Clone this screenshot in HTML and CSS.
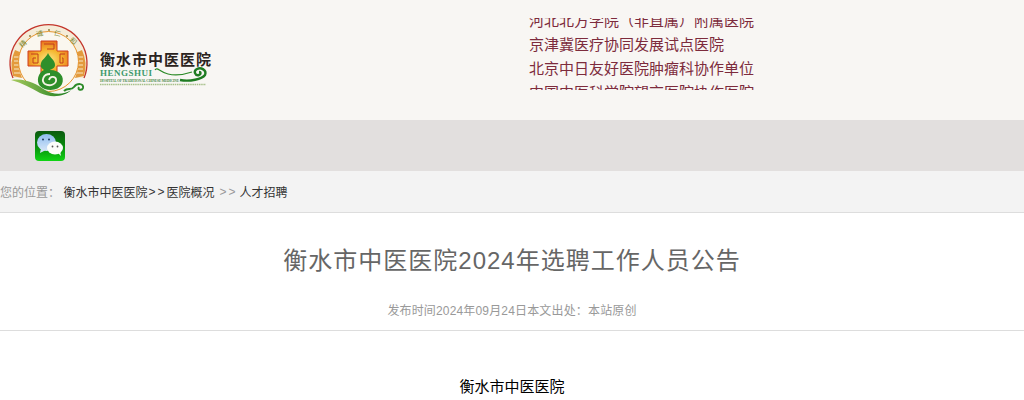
FILE: index.html
```html
<!DOCTYPE html>
<html lang="zh-CN">
<head>
  <meta charset="UTF-8" />
  <title>衡水市中医医院2024年选聘工作人员公告</title>
  <link rel="stylesheet" href="styles.css">
</head>
<body>
  <div class="header">
    <svg class="logo" width="215" height="80" viewBox="8 20 215 80" role="img" aria-label="衡水市中医医院">
      <defs>
        <radialGradient id="gold" cx="0.5" cy="0.6" r="0.6">
          <stop offset="0" stop-color="#fbe98a"/>
          <stop offset="0.55" stop-color="#f5b52e"/>
          <stop offset="1" stop-color="#e8741f"/>
        </radialGradient>
        <linearGradient id="leaf" x1="0" y1="0" x2="1" y2="0">
          <stop offset="0" stop-color="#a9cb5e"/>
          <stop offset="1" stop-color="#167a1c"/>
        </linearGradient>
      </defs>
      <!-- ring -->
      <path d="M13 78A38.500 38.500 0 1 1 84 78" fill="#f5ecd8" stroke="#c4362c" stroke-width="1.300"/>
      <path d="M13 76A37 37 0 0 1 15 50L22 53A30 30 0 0 0 22 78Z" fill="#e39a3c"/>
      <path d="M84 76A37 37 0 0 0 82 50L75 53A30 30 0 0 1 75 78Z" fill="#e39a3c"/>
      <path d="M14 57H21M14 61H20M14 65H20M14 69H21M14 73H21M76 57H83M77 61H83M77 65H83M77 69H83M76 73H83" stroke="#f8e9c8" stroke-width="1"/>
      <circle cx="48.500" cy="61.500" r="30" fill="#faf7ef" stroke="#e6952e" stroke-width="1"/>
      <text class="logo-ring" x="19" y="46" transform="rotate(-42 23 43)">精</text>
      <text class="logo-ring" x="36" y="36" transform="rotate(-14 40 33)">诚</text>
      <text class="logo-ring" x="54" y="36" transform="rotate(12 58 33)">仁</text>
      <text class="logo-ring" x="70" y="44" transform="rotate(40 74 41)">和</text>
      <circle cx="30" cy="36" r=".9" fill="#8a7a35"/>
      <circle cx="49" cy="30" r=".9" fill="#8a7a35"/>
      <circle cx="67" cy="36" r=".9" fill="#8a7a35"/>
      <!-- cross -->
      <path d="M41 41H57V51H68V66H57V73H41V66H28V51H41Z" fill="url(#gold)" stroke="#cf3f1e" stroke-width="1"/>
      <path d="M44 44H54V49H47M31 54H38V63H33V58H36M65 54H60V63H63V58H62" fill="none" stroke="#c23c1c" stroke-width="1"/>
      <!-- gourd and waves -->
      <path d="M48 53C50 58 55 60 55 65C55 68 52 69 50 70C60 70 65 77 62 84C59 91 46 92 40 86C36 81 38 73 44 70C41 68 40 66 41 63C42 59 46 58 48 53Z" fill="#2f8f2a"/>
      <path d="M50 74C43 74 41 81 45 84C50 87 57 84 56 79C55 76 50 76 49 80" fill="none" stroke="#f6f3e4" stroke-width="1.800"/>
      <path d="M11 80C26 78 36 84 45 90C53 95 64 95 71 90C65 97 50 98 40 93C31 88 22 83 11 80Z" fill="url(#leaf)"/>
      <path d="M64 91C68 87 71 91 74 87C77 83 84 83 83 88C82 91 77 90 79 87" fill="none" stroke="#2c8a28" stroke-width="2"/>
      <!-- name block -->
      <text class="logo-name" x="100" y="65">衡水市中医医院</text>
      <text class="logo-en" x="100" y="76" textLength="52">HENGSHUI</text>
      <text class="logo-sub" x="100" y="81.500" textLength="79">HOSPITAL OF TRADITIONAL CHINESE MEDICINE</text>
      <path d="M100 84.500H206" stroke="#a6c089" stroke-width="1.400" stroke-dasharray="1.500 .7"/>
      <path d="M155 70C157 66 161 73 168 74C176 76 186 74 192 72" fill="none" stroke="#2c8a28" stroke-width="1.200"/>
      <path d="M180 80C190 82 202 79 205 75C207 70 201 67 197 69C193 71 195 76 199 75C201 74 201 72 199 72" fill="none" stroke="#1f7c22" stroke-width="2.400"/>
    </svg>
    <div class="notice-box">
      <ul class="notice-list">
        <li>河北北方学院（非直属）附属医院</li>
        <li>京津冀医疗协同发展试点医院</li>
        <li>北京中日友好医院肿瘤科协作单位</li>
        <li>中国中医科学院望京医院协作医院</li>
      </ul>
    </div>
  </div>

  <div class="share-bar">
    <svg class="wechat" width="30" height="30" viewBox="0 0 30 30" role="img" aria-label="微信">
      <defs>
        <linearGradient id="wx" x1="0" y1="0" x2="0" y2="1">
          <stop offset="0" stop-color="#0b5a10"/>
          <stop offset="0.5" stop-color="#078a0c"/>
          <stop offset="1" stop-color="#10d414"/>
        </linearGradient>
        <linearGradient id="bubble" x1="0" y1="0" x2="0" y2="1">
          <stop offset="0" stop-color="#8fbdf0"/>
          <stop offset="1" stop-color="#d6e6f8"/>
        </linearGradient>
      </defs>
      <rect width="30" height="30" rx="4" fill="url(#wx)"/>
      <ellipse cx="11.500" cy="11.500" rx="9.500" ry="8.500" fill="url(#bubble)"/>
      <path d="M6 17L5 22L11 19Z" fill="#d0e2f6"/>
      <circle cx="8" cy="8.500" r="1" fill="#1f3f66"/>
      <circle cx="14" cy="8.500" r="1" fill="#1f3f66"/>
      <ellipse cx="20" cy="17" rx="8" ry="6.500" fill="#fbfdfb"/>
      <path d="M23 22L26 25L25 20Z" fill="#fbfdfb"/>
      <circle cx="17.500" cy="15.500" r=".9" fill="#555"/>
      <circle cx="22.500" cy="15.500" r=".9" fill="#555"/>
    </svg>
  </div>

  <div class="crumbs">
    <span class="crumbs-label">您的位置：</span>
    <a class="crumbs-link">衡水市中医医院</a>
    <span class="crumbs-arrows">&gt;&gt;</span>
    <a class="crumbs-link">医院概况</a>
    <span class="crumbs-sep">&gt;&gt;</span>
    <a class="crumbs-link">人才招聘</a>
  </div>

  <div class="article-head">
    <h1 class="article-title">衡水市中医医院2024年选聘工作人员公告</h1>
    <p class="article-meta">发布时间2024年09月24日本文出处：本站原创</p>
  </div>

  <div class="article-body">
    <p>衡水市中医医院</p>
  </div>
</body>
</html>
```

FILE: styles.css
```css
body {
  margin: 0;
  height: 400px;
  overflow: hidden;
  background: #fff;
  font-family: "Liberation Sans", "Noto Sans CJK SC", sans-serif;
  color: #333;
}

.header {
  height: 120px;
  background: #f8f6f3;
  display: flex;
  align-items: flex-start;
  padding-left: 8px;
  box-sizing: border-box;
}
.logo { margin-top: 20px; flex: none; }
.logo-ring { font-size: 7px; fill: #7a8a35; }
.logo-name { font-size: 15px; font-weight: 700; letter-spacing: 1px; fill: #2b2320; }
.logo-en { font-family: "Liberation Serif", serif; font-size: 9px; font-weight: 700; fill: #3f9a6c; }
.logo-sub { font-family: "Liberation Serif", serif; font-size: 3.500px; font-weight: 700; fill: #4c8a4a; }

.notice-box {
  margin: 18px 0 0 306px;
  width: 240px;
  height: 72px;
  overflow: hidden;
}
.notice-list {
  list-style: none;
  margin: -9px 0 0;
  padding: 0;
  font-size: 15px;
  line-height: 24px;
  color: #7d2b3c;
}

.share-bar {
  height: 51px;
  background: #e2dfde;
  display: flex;
  align-items: center;
  padding-left: 35px;
}

.crumbs {
  height: 41px;
  background: #f3f3f3;
  border-bottom: 1px solid #ddd;
  display: flex;
  align-items: center;
  font-size: 12px;
}
.crumbs-label { color: #999; width: 63.500px; }
.crumbs-link { color: #333; }
.crumbs-arrows { color: #333; margin-left: 1px; letter-spacing: 2px; }
.crumbs-sep { color: #999; margin: 0 2px 0 5px; letter-spacing: 2px; }

.article-head {
  height: 118px;
  border-bottom: 1px solid #ddd;
  text-align: center;
  box-sizing: border-box;
}
.article-title {
  margin: 0;
  padding-top: 31px;
  font-size: 24px;
  line-height: 34px;
  font-weight: 400;
  letter-spacing: 1px;
  color: #666;
}
.article-meta {
  margin: 23px 0 0;
  font-size: 12px;
  line-height: 20px;
  letter-spacing: .16px;
  color: #999;
}

.article-body {
  text-align: center;
  font-size: 15px;
  color: #000;
}
.article-body p { margin: 0; padding-top: 45px; line-height: 22px; }
```
